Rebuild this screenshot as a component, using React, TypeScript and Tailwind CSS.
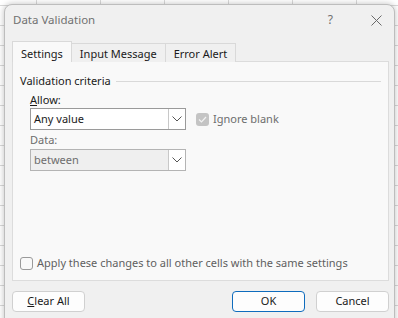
import { useState } from 'react'

function ChevronDown() {
  return (
    <svg width="10" height="6" viewBox="0 0 10 6" fill="none">
      <path d="M0.5 0.5L5 5L9.5 0.5" stroke="#555" strokeWidth="1" />
    </svg>
  )
}

function ComboBox({ value, disabled }: { value: string; disabled?: boolean }) {
  return (
    <div
      className={`flex h-[22px] w-[156px] border ${disabled ? 'border-[#b4b4b4] bg-[#efefef] text-[#6d6d6d]' : 'border-[#9a9a9a] bg-white text-[#1a1a1a]'}`}
    >
      <div className="flex flex-1 items-center pl-[3px]">{value}</div>
      <div className="flex w-[17px] items-center justify-center border-l border-[#c8c8c8] bg-white">
        <ChevronDown />
      </div>
    </div>
  )
}

export default function App() {
  const [tab, setTab] = useState('Settings')
  const [applyAll, setApplyAll] = useState(false)
  const tabs = ['Settings', 'Input Message', 'Error Alert']

  return (
    <div
      className="h-[318px] w-[398px] overflow-hidden bg-white pl-[4px] pt-[4px] text-[11px] text-[#1a1a1a] bg-[linear-gradient(to_right,#d9d9d9_1px,transparent_1px),linear-gradient(to_bottom,#d9d9d9_1px,transparent_1px)] bg-[length:64px_20px] bg-[position:36px_5px]"
      style={{ fontFamily: '"Noto Sans", "Segoe UI", sans-serif' }}
    >
      <div className="h-[330px] w-[391px] rounded-t-[8px] border border-[#bdbdbd] bg-[#f0f0f0] shadow-[0_0_6px_rgba(0,0,0,0.25)]">
        {/* Title bar */}
        <div className="flex h-[30px] items-center pl-[8px] pr-[12px] text-[11.5px] text-[#707070]">
          <span className="flex-1">Data Validation</span>
          <span className="mr-[38px] text-[12px] text-[#707070]">?</span>
          <svg width="11" height="11" viewBox="0 0 11 11">
            <path d="M0.5 0.5L10.5 10.5M10.5 0.5L0.5 10.5" stroke="#6a6a6a" strokeWidth="1" />
          </svg>
        </div>

        {/* Tabs */}
        <div className="mt-[6px] flex items-end pl-[7px]">
          {tabs.map(t => (
            <button
              key={t}
              onClick={() => setTab(t)}
              className={`flex items-center border border-b-0 border-[#d9d9d9] px-[8px] ${t === tab ? 'relative z-10 h-[21px] bg-[#f9f9f9] pt-[4px]' : '-ml-px h-[19px] bg-[#f0f0f0] pt-[2px]'}`}
            >
              {t}
            </button>
          ))}
        </div>

        {/* Panel */}
        <div className="-mt-px ml-[7px] h-[220px] w-[377px] border border-[#dcdcdc] bg-[#f9f9f9] px-[7px] pt-[12px]">
          <div className="flex h-[15px] items-center gap-[5px]">
            <span>Validation criteria</span>
            <div className="h-px flex-1 bg-[#d9d9d9]" />
          </div>

          <div className="ml-[10px] mt-[2px]">
            <div className="leading-[17px]">
              <span className="underline">A</span>llow:
            </div>
            <div className="flex items-center">
              <ComboBox value="Any value" />
              <label className="ml-[10px] flex items-center gap-[4px] text-[#6d6d6d]">
                <span className="flex h-[13px] w-[13px] items-center justify-center rounded-[3px] bg-[#c4c4c4]">
                  <svg width="9" height="7" viewBox="0 0 9 7">
                    <path d="M1 3.5L3.5 6L8 1" stroke="#f2f2f2" strokeWidth="1.2" fill="none" />
                  </svg>
                </span>
                Ignore blank
              </label>
            </div>
            <div className="mt-[1px] leading-[18px] text-[#6d6d6d]">Data:</div>
            <ComboBox value="between" disabled />
          </div>

          <label className="mt-[85px] flex h-[15px] items-center gap-[4px] text-[#5f5f5f]" onClick={() => setApplyAll(!applyAll)}>
            <span className="h-[13px] w-[13px] rounded-[3px] border border-[#9a9a9a] bg-[#f9f9f9]" />
            Apply these changes to all other cells with the same settings
          </label>
        </div>

        {/* Buttons */}
        <div className="mt-[10px] flex pl-[7px] pr-[5px]">
          <button className="h-[21px] w-[73px] rounded-[4px] border border-[#d0d0d0] bg-[#fdfdfd]">
            <span className="underline">C</span>lear All
          </button>
          <div className="flex-1" />
          <button className="h-[21px] w-[73px] rounded-[4px] border border-[#0f6cbd] bg-[#fdfdfd]">OK</button>
          <button className="ml-[11px] h-[21px] w-[73px] rounded-[4px] border border-[#d0d0d0] bg-[#fdfdfd]">Cancel</button>
        </div>
      </div>
    </div>
  )
}
